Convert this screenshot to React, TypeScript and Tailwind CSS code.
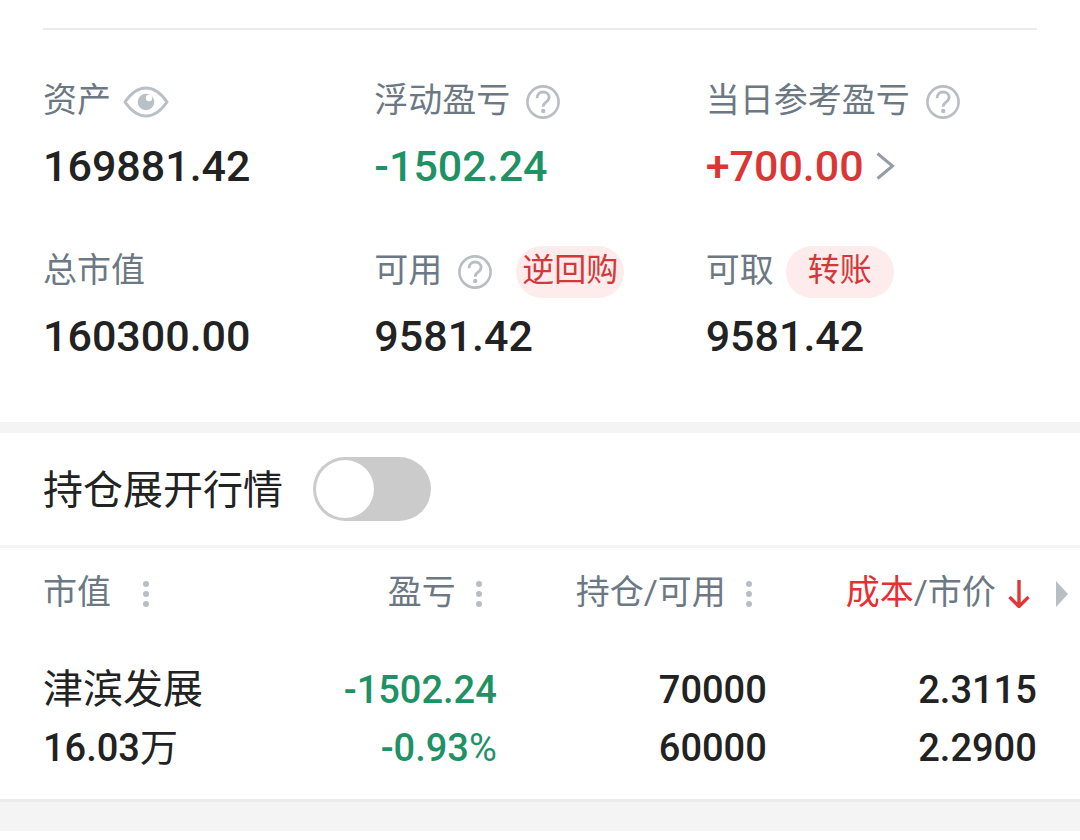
import { useState } from "react";
import type { ReactNode } from "react";

function EyeIcon() {
  return (
    <svg className="w-[46px] h-8" viewBox="0 0 46 32" fill="none">
      <path
        d="M2 16C8.5 6.5 15.5 2 23 2s14.5 4.5 21 14C37.500 25.500 30.500 30 23 30S8.500 25.500 2 16Z"
        stroke="#b9c0c7"
        strokeWidth="3"
        strokeLinejoin="round"
      />
      <circle cx="23" cy="16" r="8.300" fill="#b9c0c7" />
      <circle cx="26" cy="12" r="3.200" fill="#fff" />
    </svg>
  );
}

function HelpIcon() {
  return (
    <svg className="size-[34px]" viewBox="0 0 34 34" fill="none">
      <circle cx="17" cy="17" r="15.600" stroke="#b9bec5" strokeWidth="2.600" />
      <path
        d="M11 13.200c0-3.700 2.600-6.200 6.100-6.200 3.500 0 6 2.200 6 5.300 0 2.400-1.300 3.700-3.100 4.900-1.900 1.200-2.800 2.200-2.800 4.600"
        stroke="#b9bec5"
        strokeWidth="2.800"
      />
      <circle cx="17.200" cy="26" r="2.200" fill="#b9bec5" />
    </svg>
  );
}

function DotsIcon() {
  return (
    <svg className="w-[6px] h-7" viewBox="0 0 6 28" fill="#b9bec5">
      <circle cx="3" cy="4" r="3" />
      <circle cx="3" cy="14" r="3" />
      <circle cx="3" cy="24" r="3" />
    </svg>
  );
}

function Label({ children }: { children: ReactNode }) {
  return (
    <span className="text-[34px] leading-[44px] pb-1 text-[#6c7883] whitespace-nowrap">
      {children}
    </span>
  );
}

function Pill({ children }: { children: ReactNode }) {
  return (
    <button
      type="button"
      className="flex w-[108px] h-[52px] items-center justify-center rounded-full bg-[#fdeceb] pb-1 text-[32px] leading-[44px] text-[#d2383a] whitespace-nowrap cursor-pointer"
    >
      {children}
    </button>
  );
}

export default function App() {
  const [expanded, setExpanded] = useState(false);

  const value = "mt-2 flex items-center text-[43px] leading-[60px] font-medium";
  const headCell = "h-[91px] p-0 font-normal";
  const headButton = "inline-flex items-center align-middle cursor-pointer";
  const cell = "pt-[22px] pb-[22px] px-0 text-right";

  return (
    <main className="bg-white text-[#222222] font-[Roboto,'Noto_Sans_CJK_SC',sans-serif]">
      {/* Account summary */}
      <section className="px-[43px] pt-7 pb-14">
        <div className="grid grid-cols-3 gap-y-[50px] border-t-2 border-[#ebebeb] pt-[46px]">
          <div>
            <div className="flex h-[52px] items-center">
              <Label>资产</Label>
              <button type="button" aria-label="隐藏资产" className="ml-3 cursor-pointer">
                <EyeIcon />
              </button>
            </div>
            <div className={value}>169881.42</div>
          </div>

          <div>
            <div className="flex h-[52px] items-center">
              <Label>浮动盈亏</Label>
              <button type="button" aria-label="浮动盈亏说明" className="ml-4 cursor-pointer">
                <HelpIcon />
              </button>
            </div>
            <div className={`${value} text-[#1f9265]`}>-1502.24</div>
          </div>

          <div>
            <div className="flex h-[52px] items-center">
              <Label>当日参考盈亏</Label>
              <button type="button" aria-label="当日参考盈亏说明" className="ml-4 cursor-pointer">
                <HelpIcon />
              </button>
            </div>
            <a href="#today" className={`${value} text-[#d93636]`}>
              +700.00
              <svg className="ml-3 w-[19px] h-7" viewBox="0 0 19 28" fill="none">
                <path d="M1.500 1.500 16.500 14 1.500 26.500" stroke="#949ca5" strokeWidth="3" />
              </svg>
            </a>
          </div>

          <div>
            <div className="flex h-[52px] items-center">
              <Label>总市值</Label>
            </div>
            <div className={value}>160300.00</div>
          </div>

          <div>
            <div className="flex h-[52px] items-center">
              <Label>可用</Label>
              <button type="button" aria-label="可用说明" className="ml-4 mr-6 cursor-pointer">
                <HelpIcon />
              </button>
              <Pill>逆回购</Pill>
            </div>
            <div className={value}>9581.42</div>
          </div>

          <div>
            <div className="flex h-[52px] items-center gap-3">
              <Label>可取</Label>
              <Pill>转账</Pill>
            </div>
            <div className={value}>9581.42</div>
          </div>
        </div>
      </section>

      {/* Expand switch */}
      <section className="flex items-center border-t-[11px] border-[#f4f4f4] px-[43px] py-6">
        <label htmlFor="expand" className="text-[40px] leading-[60px] pt-1 whitespace-nowrap">
          持仓展开行情
        </label>
        <input
          id="expand"
          type="checkbox"
          role="switch"
          checked={expanded}
          onChange={(e) => setExpanded(e.target.checked)}
          className="ml-[30px] h-16 w-[118px] shrink-0 appearance-none rounded-full bg-[#cbcbcb] p-[3px] cursor-pointer before:block before:size-[58px] before:rounded-full before:bg-white before:transition-transform checked:bg-[#d93636] checked:before:translate-x-[54px]"
        />
      </section>

      {/* Holdings */}
      <section className="border-t-3 border-[#f3f3f3]">
        <table className="w-full table-fixed border-collapse whitespace-nowrap">
          <thead className="text-[34px] leading-[44px] text-[#6c7883]">
            <tr>
              <th className={`${headCell} w-[21%] pl-[43px] text-left`}>
                <button type="button" className={`${headButton} gap-8`}>
                  <span className="pb-1">市值</span>
                  <DotsIcon />
                </button>
              </th>
              <th className={`${headCell} w-[25%] pr-[15px] text-right`}>
                <button type="button" className={`${headButton} gap-5`}>
                  <span className="pb-1">盈亏</span>
                  <DotsIcon />
                </button>
              </th>
              <th className={`${headCell} w-[25%] pr-[15px] text-right`}>
                <button type="button" className={`${headButton} gap-5`}>
                  <span className="pb-1">持仓/可用</span>
                  <DotsIcon />
                </button>
              </th>
              <th className={`${headCell} w-[25%] pr-[7px] text-right`}>
                <button type="button" className={`${headButton} gap-3`}>
                  <span className="pb-1">
                    <span className="text-[#e42f33]">成本</span>/市价
                  </span>
                  <svg className="w-[22px] h-7" viewBox="0 0 22 28" fill="none">
                    <path d="M11 0v26M1.500 17 11 26.500 20.500 17" stroke="#dc393a" strokeWidth="3.400" />
                  </svg>
                </button>
              </th>
              <th className={`${headCell} w-[4%]`}>
                <button type="button" aria-label="更多" className="flex w-full justify-end pr-3 cursor-pointer">
                  <svg className="w-3 h-[26px]" viewBox="0 0 12 26" fill="#b9bec5">
                    <path d="M0 0 12 13 0 26Z" />
                  </svg>
                </button>
              </th>
            </tr>
          </thead>
          <tbody className="text-[38px] leading-[58px] font-medium">
            <tr>
              <td className="pt-[22px] pb-[22px] pl-[43px]">
                <div className="text-[40px] font-normal">津滨发展</div>
                <div>
                  16.03<span className="font-normal">万</span>
                </div>
              </td>
              <td className={`${cell} text-[#1f9265]`}>
                <div>-1502.24</div>
                <div>
                  -0.93<span className="font-normal">%</span>
                </div>
              </td>
              <td className={cell}>
                <div>70000</div>
                <div>60000</div>
              </td>
              <td className={cell}>
                <div>2.3115</div>
                <div>2.2900</div>
              </td>
              <td />
            </tr>
          </tbody>
        </table>
      </section>

      <div className="h-8 border-t-3 border-[#ebebeb] bg-[#f4f4f4]" />
    </main>
  );
}
